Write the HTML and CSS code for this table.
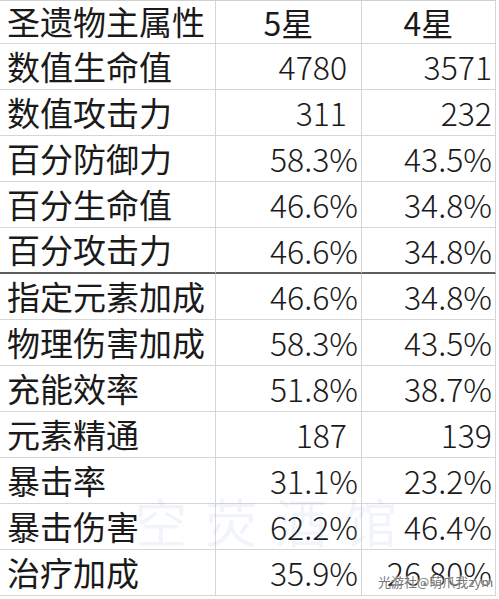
FILE: index.html
```html
<!DOCTYPE html>
<html lang="zh-CN">
<head>
<meta charset="utf-8">
<title>圣遗物主属性</title>
<link rel="stylesheet" href="styles.css">
</head>
<body>
<div class="sheet">
  <div class="table">
    <div class="cell head name">圣遗物主属性</div>
    <div class="cell head star">5星</div>
    <div class="cell head star">4星</div>

    <div class="cell name">数值生命值</div>
    <div class="cell num int">4780</div>
    <div class="cell num">3571</div>

    <div class="cell name">数值攻击力</div>
    <div class="cell num int">311</div>
    <div class="cell num">232</div>

    <div class="cell name">百分防御力</div>
    <div class="cell num">58.3%</div>
    <div class="cell num">43.5%</div>

    <div class="cell name">百分生命值</div>
    <div class="cell num">46.6%</div>
    <div class="cell num">34.8%</div>

    <div class="cell name sep">百分攻击力</div>
    <div class="cell num sep">46.6%</div>
    <div class="cell num sep">34.8%</div>

    <div class="cell name">指定元素加成</div>
    <div class="cell num">46.6%</div>
    <div class="cell num">34.8%</div>

    <div class="cell name">物理伤害加成</div>
    <div class="cell num">58.3%</div>
    <div class="cell num">43.5%</div>

    <div class="cell name">充能效率</div>
    <div class="cell num">51.8%</div>
    <div class="cell num">38.7%</div>

    <div class="cell name">元素精通</div>
    <div class="cell num int">187</div>
    <div class="cell num">139</div>

    <div class="cell name">暴击率</div>
    <div class="cell num">31.1%</div>
    <div class="cell num">23.2%</div>

    <div class="cell name">暴击伤害</div>
    <div class="cell num">62.2%</div>
    <div class="cell num">46.4%</div>

    <div class="cell name">治疗加成</div>
    <div class="cell num">35.9%</div>
    <div class="cell num">26.80%</div>
  </div>
  <div class="wm-big">空荧酒馆</div>
  <div class="wm-small">光游社@萌爪我zym</div>
</div>
</body>
</html>
```
FILE: styles.css
```css
html, body {
  margin: 0;
  padding: 0;
  background: #ffffff;
}

.sheet {
  position: relative;
  width: 499px;
  height: 599px;
  overflow: hidden;
  font-family: "Noto Sans CJK SC", "Noto Sans", sans-serif;
  color: #1a1a1a;
}

.table {
  display: grid;
  grid-template-columns: 216px 146px 134px;
  grid-template-rows: 43px;
  grid-auto-rows: 46px;
  width: 496px;
  border-top: 1px solid #cfcfcf;
}

.cell {
  box-sizing: border-box;
  border-bottom: 1px solid #d6d6d6;
  border-right: 1px solid #d6d6d6;
  display: flex;
  align-items: center;
  font-size: 32px;
  line-height: 1.2;
  white-space: nowrap;
}

.name {
  padding-left: 7px;
  font-size: 33px;
  font-weight: 400;
}

.star {
  justify-content: center;
  font-weight: 400;
}

.num {
  justify-content: flex-end;
  padding-right: 3px;
  font-weight: 200;
}

.num.int {
  padding-right: 14px;
}

.sep {
  border-bottom: 2px solid #5e5e5e;
}

.wm-big {
  position: absolute;
  left: 135px;
  top: 495px;
  font-size: 52px;
  letter-spacing: 18px;
  line-height: 1;
  white-space: nowrap;
  color: rgba(120, 160, 215, 0.10);
  pointer-events: none;
}

.wm-small {
  position: absolute;
  left: 378px;
  top: 575px;
  font-size: 13px;
  line-height: 1;
  white-space: nowrap;
  color: rgba(100, 100, 100, 0.9);
  text-shadow: 0 0 2px #ffffff, 0 0 2px #ffffff;
  pointer-events: none;
}
```
